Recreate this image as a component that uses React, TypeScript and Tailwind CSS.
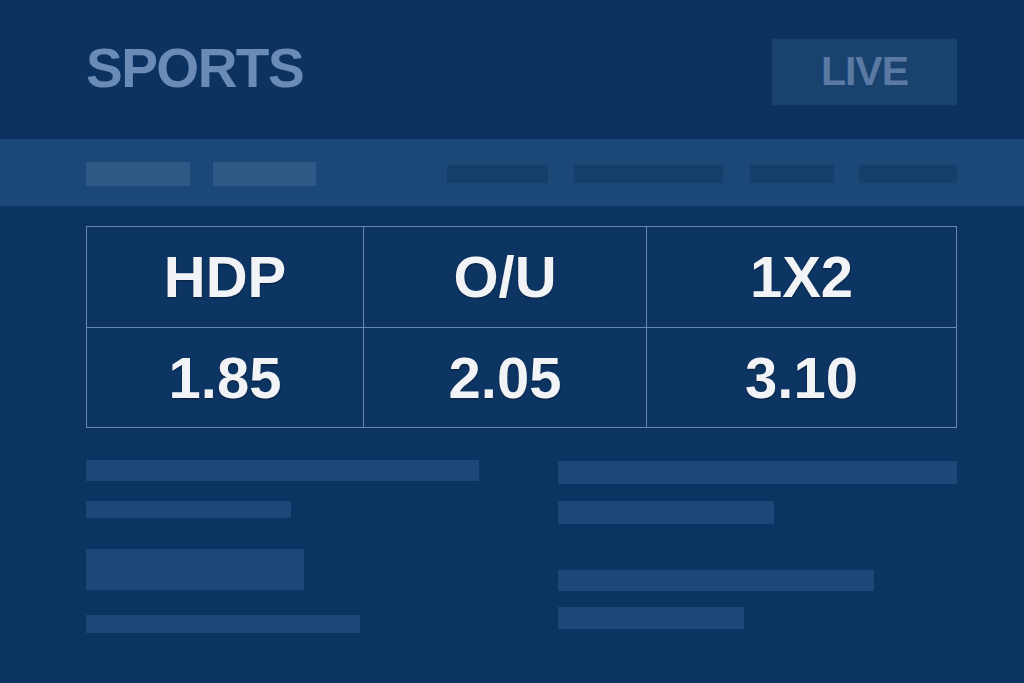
import React from 'react';

const headers = ['HDP', 'O/U', '1X2'];
const odds = ['1.85', '2.05', '3.10'];

const leftBars = [
  'w-[393px] h-[21px]',
  'w-[205px] h-[17px] mt-[20px]',
  'w-[218px] h-[41px] mt-[31px]',
  'w-[274px] h-[18px] mt-[25px]',
];

const rightBars = [
  'w-[399px] h-[23px]',
  'w-[216px] h-[23px] mt-[17px]',
  'w-[316px] h-[21px] mt-[46px]',
  'w-[186px] h-[22px] mt-[16px]',
];

const cellWidths = ['w-[276px]', 'w-[283px]', 'flex-1'];

const OddsRow: React.FC<{ items: string[]; top?: boolean }> = ({ items, top }) => (
  <div className={`flex h-[100px] ${top ? '' : 'border-t border-[#6a87ad]'}`}>
    {items.map((item, i) => (
      <div
        key={item}
        className={`${cellWidths[i]} flex items-center justify-center ${i > 0 ? 'border-l border-[#6a87ad]' : ''}`}
      >
        <span className="text-[58px] font-bold leading-none text-[#f1f3f6] [text-shadow:0_1px_2px_rgba(0,0,0,0.45)]">
          {item}
        </span>
      </div>
    ))}
  </div>
);

export default function App() {
  return (
    <div className="w-[1024px] h-[683px] overflow-hidden bg-[#0c3463] font-['Liberation_Sans',Arial,sans-serif]">
      <header className="h-[139px] bg-[#0c3262] flex items-center justify-between pl-[86px] pr-[67px]">
        <h1 className="text-[55px] font-bold tracking-[-1.5px] leading-none text-[#6a8bb6] -mt-[2px]">
          SPORTS
        </h1>
        <div className="w-[185px] h-[66px] bg-[#19426f] flex items-center justify-center mt-[4px]">
          <span className="text-[41px] font-bold tracking-[-1px] leading-none text-[#5a7aa4]">LIVE</span>
        </div>
      </header>

      <nav className="h-[67px] bg-[#1b4876] flex items-center justify-between pl-[86px] pr-[67px]">
        <div className="flex gap-[23px] mt-[3px]">
          <div className="w-[104px] h-[24px] bg-[#2e5987]" />
          <div className="w-[103px] h-[24px] bg-[#2e5987]" />
        </div>
        <div className="flex items-center mt-[3px]">
          <div className="w-[101px] h-[18px] bg-[#153e6b]" />
          <div className="w-[149px] h-[18px] bg-[#153e6b] ml-[26px]" />
          <div className="w-[84px] h-[18px] bg-[#153e6b] ml-[27px]" />
          <div className="w-[98px] h-[18px] bg-[#153e6b] ml-[25px]" />
        </div>
      </nav>

      <section className="ml-[86px] mt-[20px] w-[871px] border border-[#6a87ad] bg-[#0d3564]">
        <OddsRow items={headers} top />
        <OddsRow items={odds} />
      </section>

      <section className="flex pl-[86px] pt-[32px]">
        <div className="w-[472px] flex flex-col">
          {leftBars.map((cls) => (
            <div key={cls} className={`${cls} bg-[#1d4777]`} />
          ))}
        </div>
        <div className="flex-1 flex flex-col pt-[1px]">
          {rightBars.map((cls) => (
            <div key={cls} className={`${cls} bg-[#1d4777]`} />
          ))}
        </div>
      </section>
    </div>
  );
}
